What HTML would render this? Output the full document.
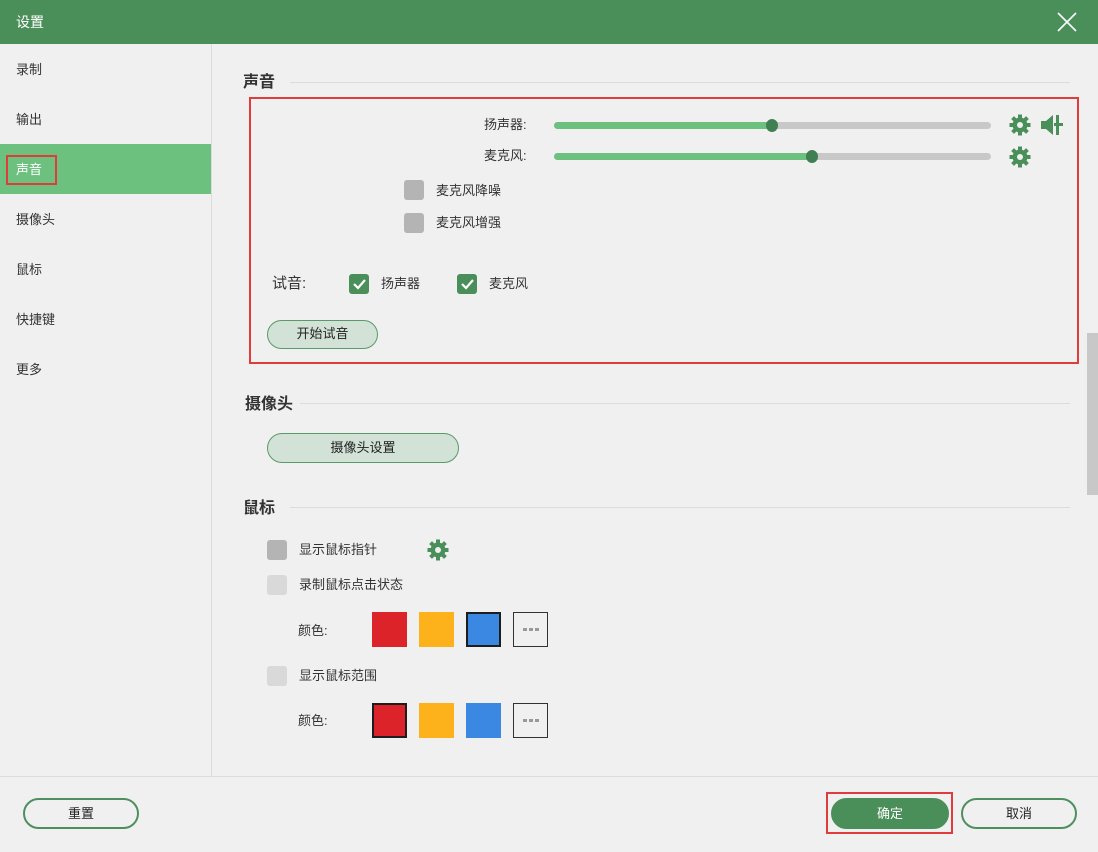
<!DOCTYPE html>
<html><head><meta charset="utf-8"><style>
*{margin:0;padding:0;box-sizing:border-box}
body{width:1098px;height:852px;background:#f0f0f0;position:relative;overflow:hidden;font-family:"Liberation Sans","Noto Sans CJK SC",sans-serif;font-size:13px;color:#333}
.a{position:absolute}
.t{position:absolute;line-height:16px;white-space:nowrap}
.cb{position:absolute;width:20px;height:20px;border-radius:3px;background:#b4b4b4}
.cbl{background:#d9d9d9}
.chk{background:#4a8f5a}
.btn{position:absolute;border:2px solid #4f8f5f;border-radius:16px;text-align:center;font-size:13px;color:#222}
.sw{position:absolute;width:35px;height:35px}
.h{position:absolute;font-size:16px;font-weight:bold;color:#333;line-height:18px}
.line{position:absolute;height:1px;background:#dcdcdc}
.more{position:absolute;width:35px;height:35px;border:1px solid #333}
.more i{position:absolute;top:15px;width:4px;height:3px;background:#999}
</style></head><body>
<div class="a" style="left:0;top:0;width:1098px;height:44px;background:#4a8f5a"></div>
<div class="t" style="left:16px;top:14px;color:#fff;font-size:14px">设置</div>
<svg class="a" style="left:1057px;top:12px" width="20" height="20"><path d="M1 1L19 19M19 1L1 19" stroke="#fff" stroke-width="1.6"/></svg>

<div class="a" style="left:211px;top:44px;width:1px;height:732px;background:#dcdcdc"></div>
<div class="a" style="left:0;top:144px;width:211px;height:50px;background:#6cc17f"></div>
<div class="a" style="left:6px;top:155px;width:51px;height:30px;border:2px solid #e03c3c"></div>
<div class="t" style="left:16px;top:62px">录制</div>
<div class="t" style="left:16px;top:112px">输出</div>
<div class="t" style="left:16px;top:162px;color:#fff">声音</div>
<div class="t" style="left:16px;top:212px">摄像头</div>
<div class="t" style="left:16px;top:262px">鼠标</div>
<div class="t" style="left:16px;top:312px">快捷键</div>
<div class="t" style="left:16px;top:362px">更多</div>

<div class="a" style="left:1087px;top:333px;width:11px;height:162px;background:#c8c8c8"></div>

<div class="h" style="left:243px;top:74px">声音</div>
<div class="line" style="left:290px;top:82px;width:780px"></div>
<div class="a" style="left:249px;top:97px;width:830px;height:267px;border:2px solid #e03c3c"></div>

<div class="t" style="left:484px;top:117px">扬声器:</div>
<div class="a" style="left:554px;top:122px;width:437px;height:7px;border-radius:4px;background:#c8c8c8"></div>
<div class="a" style="left:554px;top:122px;width:218px;height:7px;border-radius:4px;background:#6cc17f"></div>
<div class="a" style="left:766px;top:119px;width:12px;height:13px;border-radius:50%;background:#3f7f52"></div>
<div class="t" style="left:484px;top:148px">麦克风:</div>
<div class="a" style="left:554px;top:153px;width:437px;height:7px;border-radius:4px;background:#c8c8c8"></div>
<div class="a" style="left:554px;top:153px;width:258px;height:7px;border-radius:4px;background:#6cc17f"></div>
<div class="a" style="left:806px;top:150px;width:12px;height:13px;border-radius:50%;background:#3f7f52"></div>

<svg class="a" style="left:1009px;top:114px" width="22" height="22" viewBox="0 0 22 22"><g fill="#4a8f5a"><circle cx="11" cy="11" r="7.5"/><g id="g"><rect x="9" y="0.5" width="4" height="5"/><rect x="9" y="16.5" width="4" height="5"/></g><use href="#g" transform="rotate(45 11 11)"/><use href="#g" transform="rotate(90 11 11)"/><use href="#g" transform="rotate(135 11 11)"/></g><circle cx="11" cy="11" r="3" fill="#f0f0f0"/></svg>
<svg class="a" style="left:1009px;top:146px" width="22" height="22" viewBox="0 0 22 22"><g fill="#4a8f5a"><circle cx="11" cy="11" r="7.5"/><g id="g2"><rect x="9" y="0.5" width="4" height="5"/><rect x="9" y="16.5" width="4" height="5"/></g><use href="#g2" transform="rotate(45 11 11)"/><use href="#g2" transform="rotate(90 11 11)"/><use href="#g2" transform="rotate(135 11 11)"/></g><circle cx="11" cy="11" r="3" fill="#f0f0f0"/></svg>
<svg class="a" style="left:1040px;top:113px" width="24" height="24" viewBox="0 0 24 24"><path d="M1 8h5l7-6v20l-7-6H1z" fill="#4a8f5a"/><rect x="16" y="2" width="3" height="20" fill="#4a8f5a"/><rect x="14" y="10" width="9" height="3" fill="#4a8f5a"/></svg>

<div class="cb" style="left:404px;top:180px"></div>
<div class="t" style="left:436px;top:183px">麦克风降噪</div>
<div class="cb" style="left:404px;top:213px"></div>
<div class="t" style="left:436px;top:215px">麦克风增强</div>

<div class="t" style="left:272px;top:276px;font-size:15px">试音:</div>
<div class="cb chk" style="left:349px;top:274px"><svg width="20" height="20"><path d="M5 10l4 4 7-8" stroke="#fff" stroke-width="2.2" fill="none"/></svg></div>
<div class="t" style="left:381px;top:276px">扬声器</div>
<div class="cb chk" style="left:457px;top:274px"><svg width="20" height="20"><path d="M5 10l4 4 7-8" stroke="#fff" stroke-width="2.2" fill="none"/></svg></div>
<div class="t" style="left:489px;top:276px">麦克风</div>
<div class="btn" style="left:267px;top:320px;width:111px;height:29px;line-height:25px;background:#d2e2d6;border-width:1px;border-color:#5a9a6a">开始试音</div>

<div class="h" style="left:245px;top:396px">摄像头</div>
<div class="line" style="left:300px;top:403px;width:770px"></div>
<div class="btn" style="left:267px;top:433px;width:192px;height:30px;line-height:28px;background:#d2e2d6;border-width:1px;border-color:#5a9a6a">摄像头设置</div>

<div class="h" style="left:243px;top:500px">鼠标</div>
<div class="line" style="left:290px;top:507px;width:780px"></div>
<div class="cb" style="left:267px;top:540px"></div>
<div class="t" style="left:299px;top:542px">显示鼠标指针</div>
<svg class="a" style="left:427px;top:539px" width="22" height="22" viewBox="0 0 22 22"><g fill="#4a8f5a"><circle cx="11" cy="11" r="7.5"/><g id="g3"><rect x="9" y="0.5" width="4" height="5"/><rect x="9" y="16.5" width="4" height="5"/></g><use href="#g3" transform="rotate(45 11 11)"/><use href="#g3" transform="rotate(90 11 11)"/><use href="#g3" transform="rotate(135 11 11)"/></g><circle cx="11" cy="11" r="3" fill="#f0f0f0"/></svg>
<div class="cb cbl" style="left:267px;top:575px"></div>
<div class="t" style="left:299px;top:577px">录制鼠标点击状态</div>
<div class="t" style="left:298px;top:623px">颜色:</div>
<div class="sw" style="left:372px;top:612px;background:#dc2329"></div>
<div class="sw" style="left:419px;top:612px;background:#fdb21c"></div>
<div class="sw" style="left:466px;top:612px;background:#3a88e2;border:2px solid #1d1d1d"></div>
<div class="more" style="left:513px;top:612px"><i style="left:9px"></i><i style="left:15px"></i><i style="left:21px"></i></div>
<div class="cb cbl" style="left:267px;top:666px"></div>
<div class="t" style="left:299px;top:668px">显示鼠标范围</div>
<div class="t" style="left:298px;top:713px">颜色:</div>
<div class="sw" style="left:372px;top:703px;background:#dc2329;border:2px solid #1d1d1d"></div>
<div class="sw" style="left:419px;top:703px;background:#fdb21c"></div>
<div class="sw" style="left:466px;top:703px;background:#3a88e2"></div>
<div class="more" style="left:513px;top:703px"><i style="left:9px"></i><i style="left:15px"></i><i style="left:21px"></i></div>

<div class="a" style="left:0;top:776px;width:1098px;height:1px;background:#dcdcdc"></div>
<div class="btn" style="left:23px;top:798px;width:116px;height:31px;line-height:27px">重置</div>
<div class="btn" style="left:831px;top:798px;width:118px;height:31px;line-height:27px;background:#4a8f5a;border-color:#4a8f5a;color:#fff">确定</div>
<div class="a" style="left:826px;top:792px;width:127px;height:42px;border:2px solid #e03c3c"></div>
<div class="btn" style="left:961px;top:798px;width:116px;height:31px;line-height:27px">取消</div>
</body></html>
